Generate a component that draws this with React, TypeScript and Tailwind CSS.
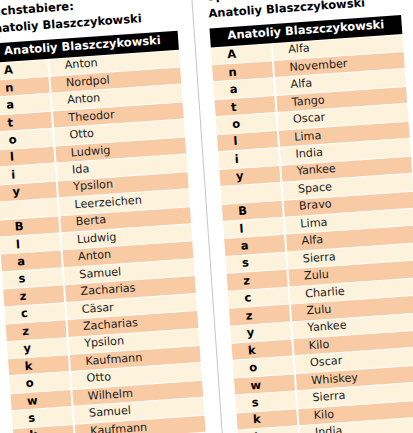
const leftRows: [string, string][] = [
  ["A", "Anton"],
  ["n", "Nordpol"],
  ["a", "Anton"],
  ["t", "Theodor"],
  ["o", "Otto"],
  ["l", "Ludwig"],
  ["i", "Ida"],
  ["y", "Ypsilon"],
  ["", "Leerzeichen"],
  ["B", "Berta"],
  ["l", "Ludwig"],
  ["a", "Anton"],
  ["s", "Samuel"],
  ["z", "Zacharias"],
  ["c", "Cäsar"],
  ["z", "Zacharias"],
  ["y", "Ypsilon"],
  ["k", "Kaufmann"],
  ["o", "Otto"],
  ["w", "Wilhelm"],
  ["s", "Samuel"],
  ["k", "Kaufmann"],
  ["i", "Ida"],
];

const rightRows: [string, string][] = [
  ["A", "Alfa"],
  ["n", "November"],
  ["a", "Alfa"],
  ["t", "Tango"],
  ["o", "Oscar"],
  ["l", "Lima"],
  ["i", "India"],
  ["y", "Yankee"],
  ["", "Space"],
  ["B", "Bravo"],
  ["l", "Lima"],
  ["a", "Alfa"],
  ["s", "Sierra"],
  ["z", "Zulu"],
  ["c", "Charlie"],
  ["z", "Zulu"],
  ["y", "Yankee"],
  ["k", "Kilo"],
  ["o", "Oscar"],
  ["w", "Whiskey"],
  ["s", "Sierra"],
  ["k", "Kilo"],
  ["i", "India"],
];

function SpellTable({ title, name, rows }: { title: string; name: string; rows: [string, string][] }) {
  return (
    <div className="w-[192px]">
      {/* heading */}
      <div className="pt-[3px] font-bold text-[11.5px] leading-[17px] text-black whitespace-nowrap">
        <p>{title}</p>
        <p>{name}</p>
      </div>

      <div className="mt-[5.6px] flex flex-col gap-[1px]">
        <div className="h-[19px] bg-black text-white font-bold text-[11.5px] flex items-center justify-center whitespace-nowrap">
          {name}
        </div>
        {rows.map(([letter, word], i) => (
          <div key={i} className="h-[16.45px] flex gap-[2px]">
            <div
              className={`w-[60px] pl-[16px] flex items-center font-bold text-[11.5px] text-black ${
                i % 2 === 0 ? "bg-[#fdf2dc]" : "bg-[#f8cba5]"
              }`}
            >
              {letter}
            </div>
            <div
              className={`flex-1 pl-[15px] flex items-center ${
                i % 2 === 0 ? "bg-[#fdf2dc]" : "bg-[#f8cba5]"
              }`}
            >
              {word}
            </div>
          </div>
        ))}
      </div>
    </div>
  );
}

export default function App() {
  return (
    <div className="w-[413px] h-[433px] overflow-hidden bg-white font-['DejaVu_Sans',Verdana,sans-serif] text-[11.2px] text-[#1c1c1c]">
      <div className="origin-top-left -rotate-[4deg]">
        <div className="flex -ml-[17px] w-[460px] h-[520px]">
          <div className="w-[209px] pr-4 border-r border-[#c6c6c6]">
            <SpellTable title="Buchstabiere:" name="Anatoliy Blaszczykowski" rows={leftRows} />
          </div>
          <div className="w-[207px] pl-[15px]">
            <SpellTable title="Spell:" name="Anatoliy Blaszczykowski" rows={rightRows} />
          </div>
        </div>
      </div>
    </div>
  );
}
